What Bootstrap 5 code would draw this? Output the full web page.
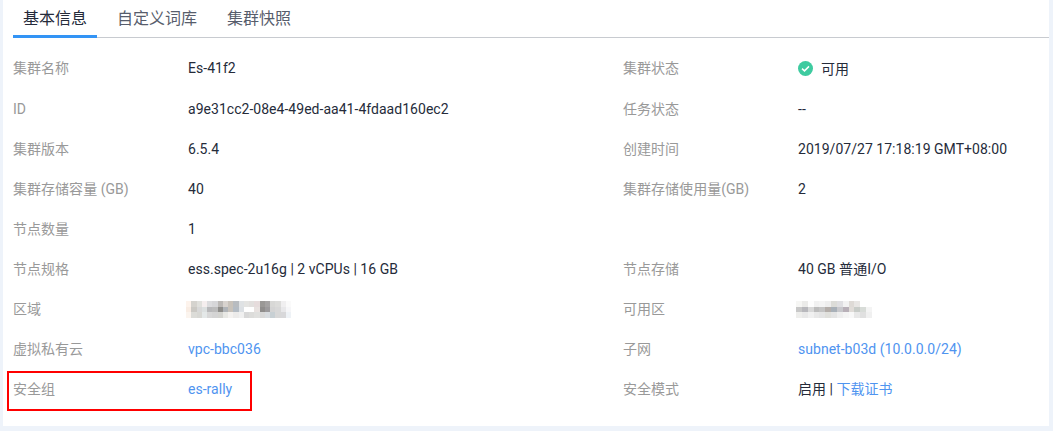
<!DOCTYPE html>
<html lang="zh">
<head>
<meta charset="utf-8">
<link href="https://cdn.jsdelivr.net/npm/bootstrap@5.3.0/dist/css/bootstrap.min.css" rel="stylesheet">
<style>
html,body{height:431px;overflow:hidden}
body{background:#eef3fa;font-family:Roboto,"Noto Sans CJK SC",sans-serif;font-size:14px;color:#252b3a;letter-spacing:.03px}
.sheet{background:#fff;margin:0 4px 5px 3px;height:426px;padding:0 0 0 10px}
.tabbar{border-bottom:1px solid #c8cbd0;height:38px}
.tabitem{font-size:16px;color:#575d6c;padding:0 10px;line-height:37px;margin-right:10px;height:38px;letter-spacing:0;white-space:nowrap}
.tabitem.sel{color:#252b3a;border-bottom:3px solid #3394f5;width:84px}
.inforows{padding-top:10px}
.inforow{height:40px;display:flex;align-items:flex-start}
.inforow.firstrow{height:41px}
.halfcell{display:flex;align-items:center;height:40px}
.halfa{width:610px}
.lab{color:#999;width:175px;flex:none;white-space:nowrap}
.val{color:#252b3a}
a.lnk{color:#4f94f0;text-decoration:none}
.okicon{width:15px;height:15px;margin-right:8px}
.oktext{padding-top:2px}
.redbox{position:absolute;left:7px;top:371px;width:245px;height:40px;border:2px solid #f00;pointer-events:none}
.mosaic{display:block;shape-rendering:crispEdges}
.mosaica{width:105px;height:17px;margin-left:-2px}
.mosaicb{width:76px;height:17px;margin-left:-2px}
</style>
</head>
<body>
<div class="sheet">
  <div class="tabbar d-flex">
    <div class="tabitem sel">基本信息</div>
    <div class="tabitem">自定义词库</div>
    <div class="tabitem">集群快照</div>
  </div>
  <div class="inforows">
    <div class="inforow firstrow"><div class="halfcell halfa"><span class="lab">集群名称</span><span class="val">Es-41f2</span></div><div class="halfcell"><span class="lab">集群状态</span><span class="val d-flex align-items-center"><svg class="okicon" viewBox="0 0 15 15"><circle cx="7.5" cy="7.5" r="7.5" fill="#3ecba0"/><path d="M4 7.6l2.5 2.3L11 5.4" fill="none" stroke="#fff" stroke-width="1.5"/></svg><span class="oktext">可用</span></span></div></div>
    <div class="inforow"><div class="halfcell halfa"><span class="lab">ID</span><span class="val">a9e31cc2-08e4-49ed-aa41-4fdaad160ec2</span></div><div class="halfcell"><span class="lab">任务状态</span><span class="val">--</span></div></div>
    <div class="inforow"><div class="halfcell halfa"><span class="lab">集群版本</span><span class="val">6.5.4</span></div><div class="halfcell"><span class="lab">创建时间</span><span class="val">2019/07/27 17:18:19 GMT+08:00</span></div></div>
    <div class="inforow"><div class="halfcell halfa"><span class="lab">集群存储容量 (GB)</span><span class="val">40</span></div><div class="halfcell"><span class="lab">集群存储使用量(GB)</span><span class="val">2</span></div></div>
    <div class="inforow"><div class="halfcell halfa"><span class="lab">节点数量</span><span class="val">1</span></div></div>
    <div class="inforow"><div class="halfcell halfa"><span class="lab">节点规格</span><span class="val">ess.spec-2u16g | 2 vCPUs | 16 GB</span></div><div class="halfcell"><span class="lab">节点存储</span><span class="val">40 GB 普通I/O</span></div></div>
    <div class="inforow"><div class="halfcell halfa"><span class="lab">区域</span><svg class="mosaic mosaica" viewBox="0 0 20 3" preserveAspectRatio="none" data-cells="fdf3ec d5d3ce e0e0dc f5eeee dcdcde d6d6d8 bcb9b6 d8d3ce c8c2ba b8bcc0 dfe2e4 e4e4e2 e2e0de e6dcdc 9a9896 a4a2a2 d8d8d6 dcdcda f0eff0 fafafa f9ede4 cbc9c4 d8d8d8 dce0e0 b8b8ba bcbcbc 8e8d8a b0b4b8 c8c2ba b4bcc4 dce0e4 ffffff ffffff e8e2e0 8f8d8c 9c9a9c d4d4d4 d8d8d8 e8e8ea f6f6f8 fbf4ee dcdcd8 d8d8d4 e4e8e8 d8d8d8 d4d4d4 d4d4d0 e8e8e4 f4f2f0 ecebea f0f0f0 d8d8d8 dcdcda e0e0de d8d8d8 d8dce0 c8d0d4 d8d8d8 d8d8da eef2f6"></svg></div><div class="halfcell"><span class="lab">可用区</span><svg class="mosaic mosaicb" viewBox="0 0 13 3" preserveAspectRatio="none" data-cells="f6f6f4 ebebe9 fdfdfd f1f1f1 f4f4f4 eeeeee dcdcd8 dfdfe2 f2f2f2 dedad6 e8e6e4 ffffff ffffff c8c8c8 b8b8bc d8d8d8 bcbcbc c4c4c4 b4aeaa a8b0b8 c8c8cc b8b0b8 e0dcd8 c8ccc8 d8dcd8 f4f4f4 eeeeec e8e8e8 f0f0f0 e8e8e8 e4e4e4 e0e0dc e4e4e4 eeeeee f4f4f4 f8f8f8 e8e8e8 e0e0e0 f0f0f0"></svg></div></div>
    <div class="inforow"><div class="halfcell halfa"><span class="lab">虚拟私有云</span><a class="lnk" href="#">vpc-bbc036</a></div><div class="halfcell"><span class="lab">子网</span><a class="lnk" href="#">subnet-b03d (10.0.0.0/24)</a></div></div>
    <div class="inforow"><div class="halfcell halfa"><span class="lab">安全组</span><a class="lnk" href="#">es-rally</a></div><div class="halfcell"><span class="lab">安全模式</span><span class="val">启用 | <a class="lnk" href="#">下载证书</a></span></div></div>
  </div>
</div>
<div class="redbox"></div>
<script src="https://cdn.jsdelivr.net/npm/bootstrap@5.3.0/dist/js/bootstrap.bundle.min.js"></script>
<script>
document.querySelectorAll('.mosaic').forEach(function(s){
  var c=s.dataset.cells.split(' '),w=s.viewBox.baseVal.width;
  c.forEach(function(h,i){
    var r=document.createElementNS('http://www.w3.org/2000/svg','rect');
    r.setAttribute('x',i%w);r.setAttribute('y',Math.floor(i/w));
    r.setAttribute('width',1);r.setAttribute('height',1);r.setAttribute('fill','#'+h);
    s.appendChild(r);
  });
});
</script>
</body>
</html>
